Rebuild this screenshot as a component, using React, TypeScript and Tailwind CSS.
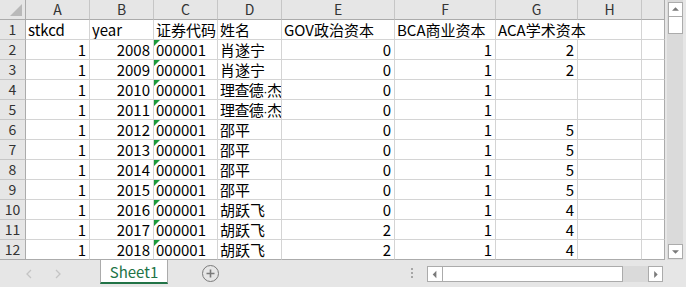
import React from "react";

const font = { fontFamily: '"Noto Sans CJK SC", "Liberation Sans", sans-serif' };

type Row = [string, string, string, string, string, string, string];

const rows: Row[] = [
  ["1", "2008", "000001", "肖遂宁", "0", "1", "2"],
  ["1", "2009", "000001", "肖遂宁", "0", "1", "2"],
  ["1", "2010", "000001", "理查德·杰", "0", "1", ""],
  ["1", "2011", "000001", "理查德·杰", "0", "1", ""],
  ["1", "2012", "000001", "邵平", "0", "1", "5"],
  ["1", "2013", "000001", "邵平", "0", "1", "5"],
  ["1", "2014", "000001", "邵平", "0", "1", "5"],
  ["1", "2015", "000001", "邵平", "0", "1", "5"],
  ["1", "2016", "000001", "胡跃飞", "0", "1", "4"],
  ["1", "2017", "000001", "胡跃飞", "2", "1", "4"],
  ["1", "2018", "000001", "胡跃飞", "2", "1", "4"],
];

const letters = ["A", "B", "C", "D", "E", "F", "G", "H", ""];

function Num({ v, last }: { v: string; last?: boolean }) {
  return (
    <div className={`h-5 border-r border-b ${last ? "border-b-[#ababab]" : "border-b-[#d4d4d4]"} border-r-[#d4d4d4] pr-[3px] text-right leading-[19px] whitespace-nowrap overflow-hidden`}>
      {v}
    </div>
  );
}

// the middle dot in 理查德·杰 is a narrow Latin one in the reference
function Name({ v }: { v: string }) {
  const parts = v.split("·");
  if (parts.length === 1) return <>{v}</>;
  return (
    <span className="tracking-[-0.6px]">
      {parts[0]}
      <span className="font-['Liberation_Sans'] text-[13px]">·</span>
      {parts[1]}
    </span>
  );
}

function Txt({ v, last, flag }: { v: string; last?: boolean; flag?: boolean }) {
  return (
    <div className={`relative h-5 border-r border-b ${last ? "border-b-[#ababab]" : "border-b-[#d4d4d4]"} border-r-[#d4d4d4] pl-[2px] leading-[19px] whitespace-nowrap overflow-hidden`}>
      {flag && (
        <span className="absolute left-0 top-0 w-0 h-0 border-t-[6px] border-t-[#1a9a3a] border-r-[6px] border-r-transparent" />
      )}
      <Name v={v} />
    </div>
  );
}

function Arrow({ dir }: { dir: "up" | "down" | "left" | "right" }) {
  const pts = {
    up: "3.5,9 7.5,5 11.5,9",
    down: "3.5,6 7.5,10 11.5,6",
    left: "9,3.5 5,7.5 9,11.5",
    right: "6,3.5 10,7.5 6,11.5",
  }[dir];
  return (
    <svg width="15" height="15" viewBox="0 0 15 15">
      <polygon points={pts} fill="#7a7a7a" />
    </svg>
  );
}

export default function App() {
  return (
    <div className="w-[686px] h-[287px] bg-[#e6e6e6] overflow-hidden text-[15px] text-black" style={font}>
      {/* --- sheet area + vertical scrollbar --- */}
      <div className="flex h-[260px]">
        <div className="w-[665px] bg-white grid grid-cols-[26px_64px_64px_64px_64px_113px_101px_82px_64px_23px] auto-rows-[20px]">
          {/* header row */}
          <div className="relative h-5 bg-[#e6e6e6] border-r border-b border-[#ababab]">
            <span className="absolute right-[3px] bottom-[3px] w-0 h-0 border-b-[12px] border-b-[#b9b9b9] border-l-[12px] border-l-transparent" />
          </div>
          {letters.map((l, i) => (
            <div
              key={i}
              className={`h-5 bg-[#e6e6e6] border-b border-b-[#ababab] border-r ${i === 8 ? "border-r-[#ababab]" : "border-r-[#c6c6c6]"} text-center leading-[19px] text-[#333] text-[14px]`}
            >
              {l}
            </div>
          ))}

          {/* row 1 headings */}
          <div className="h-5 bg-[#e6e6e6] border-r border-b border-r-[#ababab] border-b-[#c6c6c6] text-center leading-[19px] text-[#333] text-[14px]">1</div>
          <Txt v="stkcd" />
          <Txt v="year" />
          <Txt v="证券代码" />
          <Txt v="姓名" />
          <Txt v="GOV政治资本" />
          <Txt v="BCA商业资本" />
          <div className="relative z-10 h-5 border-b border-b-[#d4d4d4] pl-[2px] leading-[19px] whitespace-nowrap">ACA学术资本</div>
          <div className="h-5 border-r border-b border-[#d4d4d4]" />
          <div className="h-5 border-r border-b border-r-[#ababab] border-b-[#d4d4d4]" />

          {rows.map((r, i) => {
            const last = i === rows.length - 1;
            return (
              <React.Fragment key={i}>
                <div className={`h-5 bg-[#e6e6e6] border-r border-b border-r-[#ababab] ${last ? "border-b-[#ababab]" : "border-b-[#c6c6c6]"} text-center leading-[19px] text-[#333] text-[14px]`}>
                  {i + 2}
                </div>
                <Num v={r[0]} last={last} />
                <Num v={r[1]} last={last} />
                <Txt v={r[2]} last={last} flag />
                <Txt v={r[3]} last={last} />
                <Num v={r[4]} last={last} />
                <Num v={r[5]} last={last} />
                <Num v={r[6]} last={last} />
                <Num v="" last={last} />
                <div className={`h-5 border-r border-b border-r-[#ababab] ${last ? "border-b-[#ababab]" : "border-b-[#d4d4d4]"}`} />
              </React.Fragment>
            );
          })}
        </div>

        {/* vertical scrollbar */}
        <div className="w-[21px] pl-[2px] pr-[3px] flex">
          <div className="w-4 bg-[#dadada] flex flex-col items-center pt-[2px] pb-[1px]">
            <div className="w-[15px] h-[15px] bg-white border border-[#ababab] flex items-center justify-center">
              <Arrow dir="up" />
            </div>
            <div className="w-[15px] h-[17px] bg-white border border-t-0 border-[#ababab]" />
            <div className="flex-1" />
            <div className="w-[15px] h-[15px] bg-white border border-[#ababab] flex items-center justify-center">
              <Arrow dir="down" />
            </div>
          </div>
        </div>
      </div>

      {/* --- bottom bar: sheet tabs + horizontal scrollbar --- */}
      <div className="flex h-[27px] items-start">
        <div className="w-[100px] h-full flex items-center pl-[26px] gap-[23px]">
          <svg width="6" height="10" viewBox="0 0 6 10">
            <polyline points="5,1 1,5 5,9" fill="none" stroke="#c4c4c4" strokeWidth="1.3" />
          </svg>
          <svg width="6" height="10" viewBox="0 0 6 10">
            <polyline points="1,1 5,5 1,9" fill="none" stroke="#c4c4c4" strokeWidth="1.3" />
          </svg>
        </div>
        <div className="w-[68px] h-[24px] bg-white border-x border-[#ababab] border-b-2 border-b-[#217346] flex items-center justify-center text-[#217346] text-[15px] leading-none">
          Sheet1
        </div>
        <div className="ml-[34px] mt-[5px] w-[17px] h-[17px] rounded-full border-[1.5px] border-[#7a7a7a] flex items-center justify-center">
          <svg width="9" height="9" viewBox="0 0 9 9">
            <path d="M4.5 0.5v8M0.5 4.5h8" stroke="#7a7a7a" strokeWidth="1.6" />
          </svg>
        </div>
        <div className="ml-[192px] mt-[8px] flex flex-col gap-[2px]">
          <span className="w-[2px] h-[2px] bg-[#a6a6a6]" />
          <span className="w-[2px] h-[2px] bg-[#a6a6a6]" />
          <span className="w-[2px] h-[2px] bg-[#a6a6a6]" />
        </div>
        <div className="ml-[14px] mt-[6px] flex h-[16px] w-[236px]">
          <div className="w-[16px] h-full bg-white border border-[#ababab] flex items-center justify-center">
            <Arrow dir="left" />
          </div>
          <div className="w-[180px] h-full bg-white border border-l-0 border-[#ababab]" />
          <div className="flex-1 h-full bg-[#dadada]" />
          <div className="w-[15px] h-full bg-white border border-[#ababab] flex items-center justify-center">
            <Arrow dir="right" />
          </div>
        </div>
      </div>
    </div>
  );
}
